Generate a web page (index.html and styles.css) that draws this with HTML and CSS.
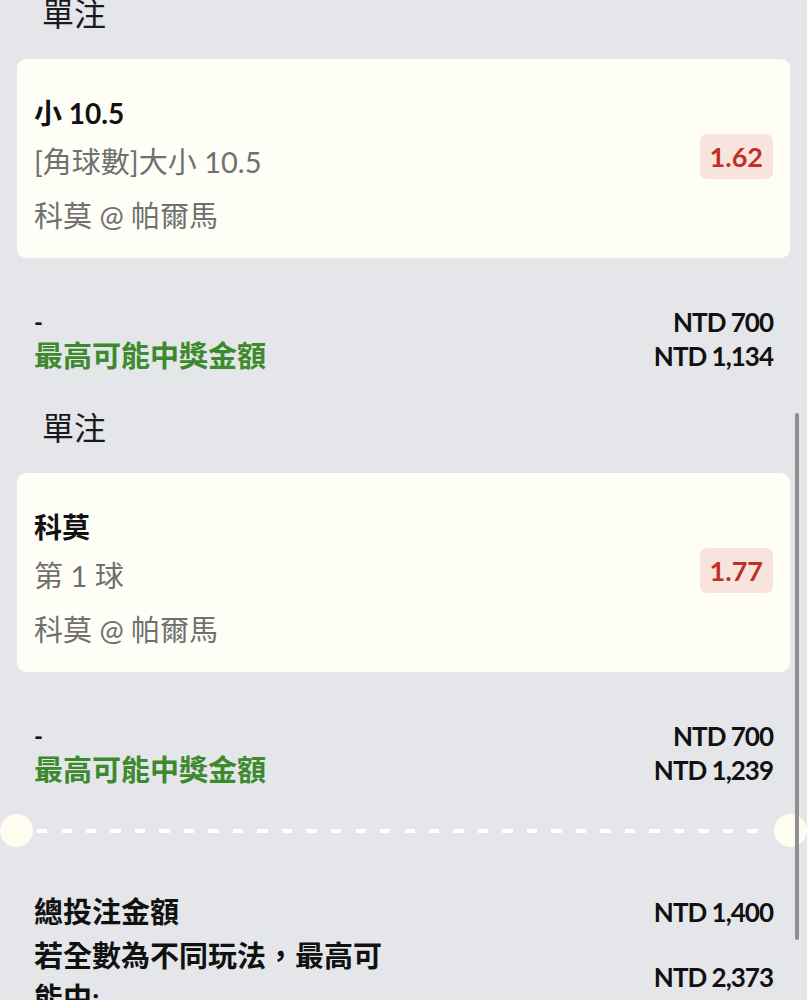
FILE: index.html
```html
<!DOCTYPE html>
<html lang="zh-Hant">
<head>
<meta charset="utf-8">
<link rel="stylesheet" href="styles.css">
</head>
<body>
<div class="page">
  <section class="bet">
    <h2 class="bet-type">單注</h2>
    <div class="card">
      <div class="card-info">
        <div class="sel">小 10.5</div>
        <div class="market">[角球數]大小 10.5</div>
        <div class="match">科莫 @ 帕爾馬</div>
      </div>
      <div class="odds">1.62</div>
    </div>
    <div class="sum">
      <div class="sum-row"><span class="dash">-</span><span class="amt">NTD 700</span></div>
      <div class="sum-row"><span class="win">最高可能中獎金額</span><span class="amt">NTD 1,134</span></div>
    </div>
  </section>
  <section class="bet">
    <h2 class="bet-type">單注</h2>
    <div class="card">
      <div class="card-info">
        <div class="sel">科莫</div>
        <div class="market">第 1 球</div>
        <div class="match">科莫 @ 帕爾馬</div>
      </div>
      <div class="odds">1.77</div>
    </div>
    <div class="sum">
      <div class="sum-row"><span class="dash">-</span><span class="amt">NTD 700</span></div>
      <div class="sum-row"><span class="win">最高可能中獎金額</span><span class="amt">NTD 1,239</span></div>
    </div>
  </section>
  <div class="sep"><span class="notch"></span><span class="line"></span><span class="notch"></span></div>
  <div class="totals">
    <div class="tot-row"><span class="tot-label">總投注金額</span><span class="amt">NTD 1,400</span></div>
    <div class="tot-row"><span class="tot-label">若全數為不同玩法，最高可能中:</span><span class="amt">NTD 2,373</span></div>
  </div>
</div>
<div class="scrollbar"></div>
</body>
</html>
```

FILE: styles.css
```css
html, body {
  margin: 0;
  padding: 0;
  background: #e5e6ea;
  height: 100%;
  overflow: hidden;
}
body {
  font-family: Lato, "Noto Sans CJK TC", sans-serif;
  color: #111;
  position: relative;
}
.page {
  margin-top: -8px;
  padding: 0 17px;
}
.bet {
  display: flex;
  flex-direction: column;
}
.bet + .bet {
  margin-top: 33px;
}
.bet-type {
  margin: 0;
  padding-left: 25px;
  font-family: "Noto Sans CJK TC", sans-serif;
  font-weight: 400;
  font-size: 32px;
  line-height: 40px;
  color: #1a1a1a;
}
.card {
  margin-top: 27px;
  background: #fffef6;
  border-radius: 9px;
  padding: 30px 17px 15px;
  display: flex;
  align-items: center;
  justify-content: space-between;
}
.card-info {
  display: flex;
  flex-direction: column;
}
.sel {
  font-size: 28px;
  font-weight: 700;
  line-height: 48px;
  color: #111;
}
.market {
  font-size: 29px;
  line-height: 50px;
  color: #707070;
}
.match {
  font-size: 29px;
  line-height: 54px;
  margin-top: 2px;
  color: #707070;
}
.odds {
  background: #f8e4dc;
  color: #c0302a;
  font-weight: 700;
  font-size: 27px;
  line-height: 45px;
  padding: 0 10px;
  border-radius: 7px;
  margin-bottom: 19px;
}
.sum {
  margin-top: 47px;
  padding: 0 17px;
}
.sum-row, .tot-row {
  display: flex;
  justify-content: space-between;
  align-items: center;
}
.sum-row {
  line-height: 34px;
}
.dash {
  font-weight: 700;
  font-size: 24px;
}
.win {
  color: #3d8a2e;
  font-weight: 700;
  font-size: 29px;
}
.amt {
  font-weight: 700;
  font-size: 26px;
  letter-spacing: -1px;
  color: #111;
}
.sep {
  margin: 27px -17px 0;
  height: 33px;
  display: flex;
  align-items: center;
}
.notch {
  width: 33px;
  height: 33px;
  border-radius: 50%;
  background: #fffdf0;
}
.line {
  flex: 1;
  height: 4px;
  margin: 0 4px;
  background: repeating-linear-gradient(90deg, #ffffff 0 10px, transparent 10px 24.5px);
}
.totals {
  margin-top: 44px;
  padding: 0 17px;
  display: flex;
  flex-direction: column;
  gap: 2px;
}
.tot-row {
  line-height: 42px;
}
.tot-label {
  font-weight: 700;
  font-size: 29px;
  max-width: 355px;
  color: #111;
}
.scrollbar {
  position: absolute;
  left: 795px;
  top: 413px;
  width: 4px;
  height: 527px;
  border-radius: 2px;
  background: #8f8f8f;
}
```
